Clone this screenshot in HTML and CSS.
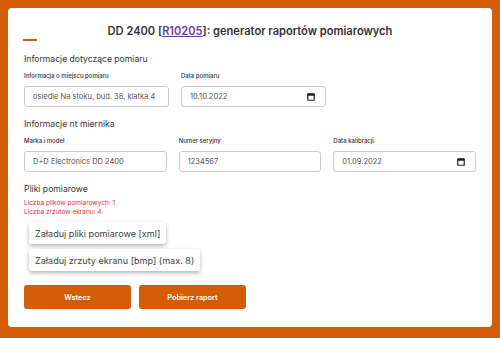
FILE: index.html
```html
<!DOCTYPE html>
<html lang="pl">
<head>
<meta charset="UTF-8">
<meta name="viewport" content="width=device-width, initial-scale=1.0">
<title>DD 2400 - generator raportów</title>
<link rel="stylesheet" href="styles.css">
</head>
<body>
    <div class="card">
        <h1 class="title">DD 2400 [<a href="#">R10205</a>]: generator raportów pomiarowych</h1>
        <div class="accent"></div>

        <h2 class="section-title">Informacje dotyczące pomiaru</h2>
        <div class="row row-two">
            <div class="field">
                <label class="field-label">Informacja o miejscu pomiaru</label>
                <div class="input">osiedle Na stoku, bud. 38, klatka 4</div>
            </div>
            <div class="field">
                <label class="field-label">Data pomiaru</label>
                <div class="input input-date">
                    <span>10.10.2022</span>
                    <svg class="cal" width="8" height="8" viewBox="0 0 8 8"><rect x="0.75" y="0.75" width="6.5" height="6.5" rx="0.6" fill="none" stroke="#222" stroke-width="1.2"/><rect x="0.75" y="0.75" width="6.5" height="2" fill="#222"/></svg>
                </div>
            </div>
        </div>

        <h2 class="section-title">Informacje nt miernika</h2>
        <div class="row row-three">
            <div class="field">
                <label class="field-label">Marka i model</label>
                <div class="input">D+D Electronics DD 2400</div>
            </div>
            <div class="field">
                <label class="field-label">Numer seryjny</label>
                <div class="input">1234567</div>
            </div>
            <div class="field">
                <label class="field-label">Data kalibracji</label>
                <div class="input input-date">
                    <span>01.09.2022</span>
                    <svg class="cal" width="8" height="8" viewBox="0 0 8 8"><rect x="0.75" y="0.75" width="6.5" height="6.5" rx="0.6" fill="none" stroke="#222" stroke-width="1.2"/><rect x="0.75" y="0.75" width="6.5" height="2" fill="#222"/></svg>
                </div>
            </div>
        </div>

        <h2 class="section-title">Pliki pomiarowe</h2>
        <div class="counts">
            <div>Liczba plików pomiarowych: 1.</div>
            <div>Liczba zrzutów ekranu: 4.</div>
        </div>
        <div class="uploads">
            <button class="upload">Załaduj pliki pomiarowe [xml]</button>
            <button class="upload">Załaduj zrzuty ekranu [bmp] (max. 8)</button>
        </div>

        <div class="actions">
            <button class="action">Wstecz</button>
            <button class="action">Pobierz raport</button>
        </div>
    </div>
</body>
</html>
```

FILE: styles.css
```css
body {
    margin: 0;
    padding: 8px;
    background-color: #d35d06;
    font-family: Inter, "Noto Sans", sans-serif;
    color: #333;
}
.card {
    background-color: white;
    border-radius: 4px;
    padding: 15px 16px 18px 16px;
}
.title {
    margin: 0;
    font-size: 11.1px;
    line-height: 16px;
    font-weight: 600;
    text-align: center;
    color: #333;
}
.title a {
    color: #6a3d9a;
}
.accent {
    width: 14px;
    height: 2px;
    margin-left: -1px;
    background-color: #d35d06;
}
.section-title {
    margin: 11px 0 0 0;
    font-size: 8.6px;
    line-height: 14px;
    font-weight: 400;
    color: #333;
}
.row {
    display: grid;
    margin-top: 5px;
}
.row-two {
    grid-template-columns: 145px 145px;
    column-gap: 12px;
}
.row-three {
    grid-template-columns: repeat(3, 1fr);
    column-gap: 12px;
}
.field-label {
    display: block;
    font-size: 6px;
    line-height: 10px;
    font-weight: 500;
    color: #333;
}
.input {
    box-sizing: border-box;
    height: 21px;
    margin-top: 5px;
    padding: 0 8px;
    border: 1px solid #ccc;
    border-radius: 3px;
    font-size: 7.5px;
    line-height: 19px;
    color: #555;
    white-space: nowrap;
}
.input-date {
    display: flex;
    justify-content: space-between;
    align-items: center;
    padding-right: 10px;
}
.row + .section-title {
    margin-top: 10px;
}
.counts {
    margin-top: 3px;
    font-size: 6.5px;
    line-height: 9px;
    color: #e0303c;
}
.uploads {
    display: flex;
    flex-direction: column;
    align-items: flex-start;
    gap: 5px;
    margin: 5px 0 0 5px;
}
.upload {
    height: 22px;
    padding: 0 6px;
    border: none;
    border-radius: 3px;
    background-color: white;
    box-shadow: 0 2px 4px rgba(0, 0, 0, 0.3);
    font-family: inherit;
    font-size: 9.1px;
    color: #444;
}
.actions {
    display: flex;
    gap: 8px;
    margin-top: 14px;
}
.action {
    width: 107px;
    height: 24px;
    border: none;
    border-radius: 3px;
    background-color: #d35d06;
    color: white;
    font-family: inherit;
    font-size: 7.3px;
    font-weight: 600;
}
```
